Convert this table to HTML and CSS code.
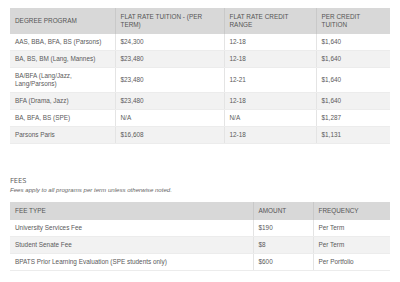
FILE: index.html
```html
<!DOCTYPE html>
<html>
<head>
<meta charset="utf-8">
<link rel="stylesheet" href="styles.css">
</head>
<body>
<div class="page">
  <table class="grid tuition">
    <colgroup><col class="c1"><col class="c2"><col class="c3"><col class="c4"></colgroup>
    <thead>
      <tr><th>DEGREE PROGRAM</th><th>FLAT RATE TUITION - (PER TERM)</th><th>FLAT RATE CREDIT RANGE</th><th>PER CREDIT TUITION</th></tr>
    </thead>
    <tbody>
      <tr><td>AAS, BBA, BFA, BS (Parsons)</td><td>$24,300</td><td>12-18</td><td>$1,640</td></tr>
      <tr><td>BA, BS, BM (Lang, Mannes)</td><td>$23,480</td><td>12-18</td><td>$1,640</td></tr>
      <tr><td>BA/BFA (Lang/Jazz, Lang/Parsons)</td><td>$23,480</td><td>12-21</td><td>$1,640</td></tr>
      <tr><td>BFA (Drama, Jazz)</td><td>$23,480</td><td>12-18</td><td>$1,640</td></tr>
      <tr><td>BA, BFA, BS (SPE)</td><td>N/A</td><td>N/A</td><td>$1,287</td></tr>
      <tr><td>Parsons Paris</td><td>$16,608</td><td>12-18</td><td>$1,131</td></tr>
    </tbody>
  </table>

  <h3 class="fees-title">FEES</h3>
  <p class="note">Fees apply to all programs per term unless otherwise noted.</p>

  <table class="grid fees">
    <colgroup><col class="f1"><col class="f2"><col class="f3"></colgroup>
    <thead>
      <tr><th>FEE TYPE</th><th>AMOUNT</th><th>FREQUENCY</th></tr>
    </thead>
    <tbody>
      <tr><td>University Services Fee</td><td>$190</td><td>Per Term</td></tr>
      <tr><td>Student Senate Fee</td><td>$8</td><td>Per Term</td></tr>
      <tr><td>BPATS Prior Learning Evaluation (SPE students only)</td><td>$600</td><td>Per Portfolio</td></tr>
    </tbody>
  </table>
</div>
</body>
</html>
```

FILE: styles.css
```css
* { box-sizing: border-box; }
html, body { margin: 0; padding: 0; background: #fff; }
body { font-family: "Liberation Sans", Arial, sans-serif; color: #5a5a5a; }
.page { padding: 8px 10px; }

.grid {
  width: 380px;
  border-collapse: collapse;
  table-layout: fixed;
  font-size: 6.4px;
  line-height: 8px;
}
.grid th, .grid td {
  text-align: left;
  vertical-align: middle;
  padding: 4px 5px;
}
.grid th {
  background: #d8d8d8;
  color: #555;
  font-weight: normal;
  line-height: 8.5px;
  padding: 4.5px 5px;
  border-left: 1px solid #c9c9c9;
}
.grid th:first-child, .grid td:first-child { border-left: none; }
.grid td {
  border-left: 1px solid #e4e4e4;
  border-bottom: 1px solid #ececec;
}
.grid tbody tr:nth-child(even) td { background: #f2f2f2; }

.c1 { width: 105px; }
.c2 { width: 109px; }
.c3 { width: 92px; }
.c4 { width: 74px; }

.f1 { width: 243px; }
.f2 { width: 60px; }
.f3 { width: 77px; }

.fees-title {
  margin: 31px 0 0;
  font-family: "Open Sans", sans-serif;
  font-weight: normal;
  font-size: 7.5px;
  line-height: 10px;
  color: #5a5a5a;
}
.note {
  margin: 1px 0 8px;
  font-style: italic;
  font-size: 6.1px;
  line-height: 8px;
  color: #666;
}
```
